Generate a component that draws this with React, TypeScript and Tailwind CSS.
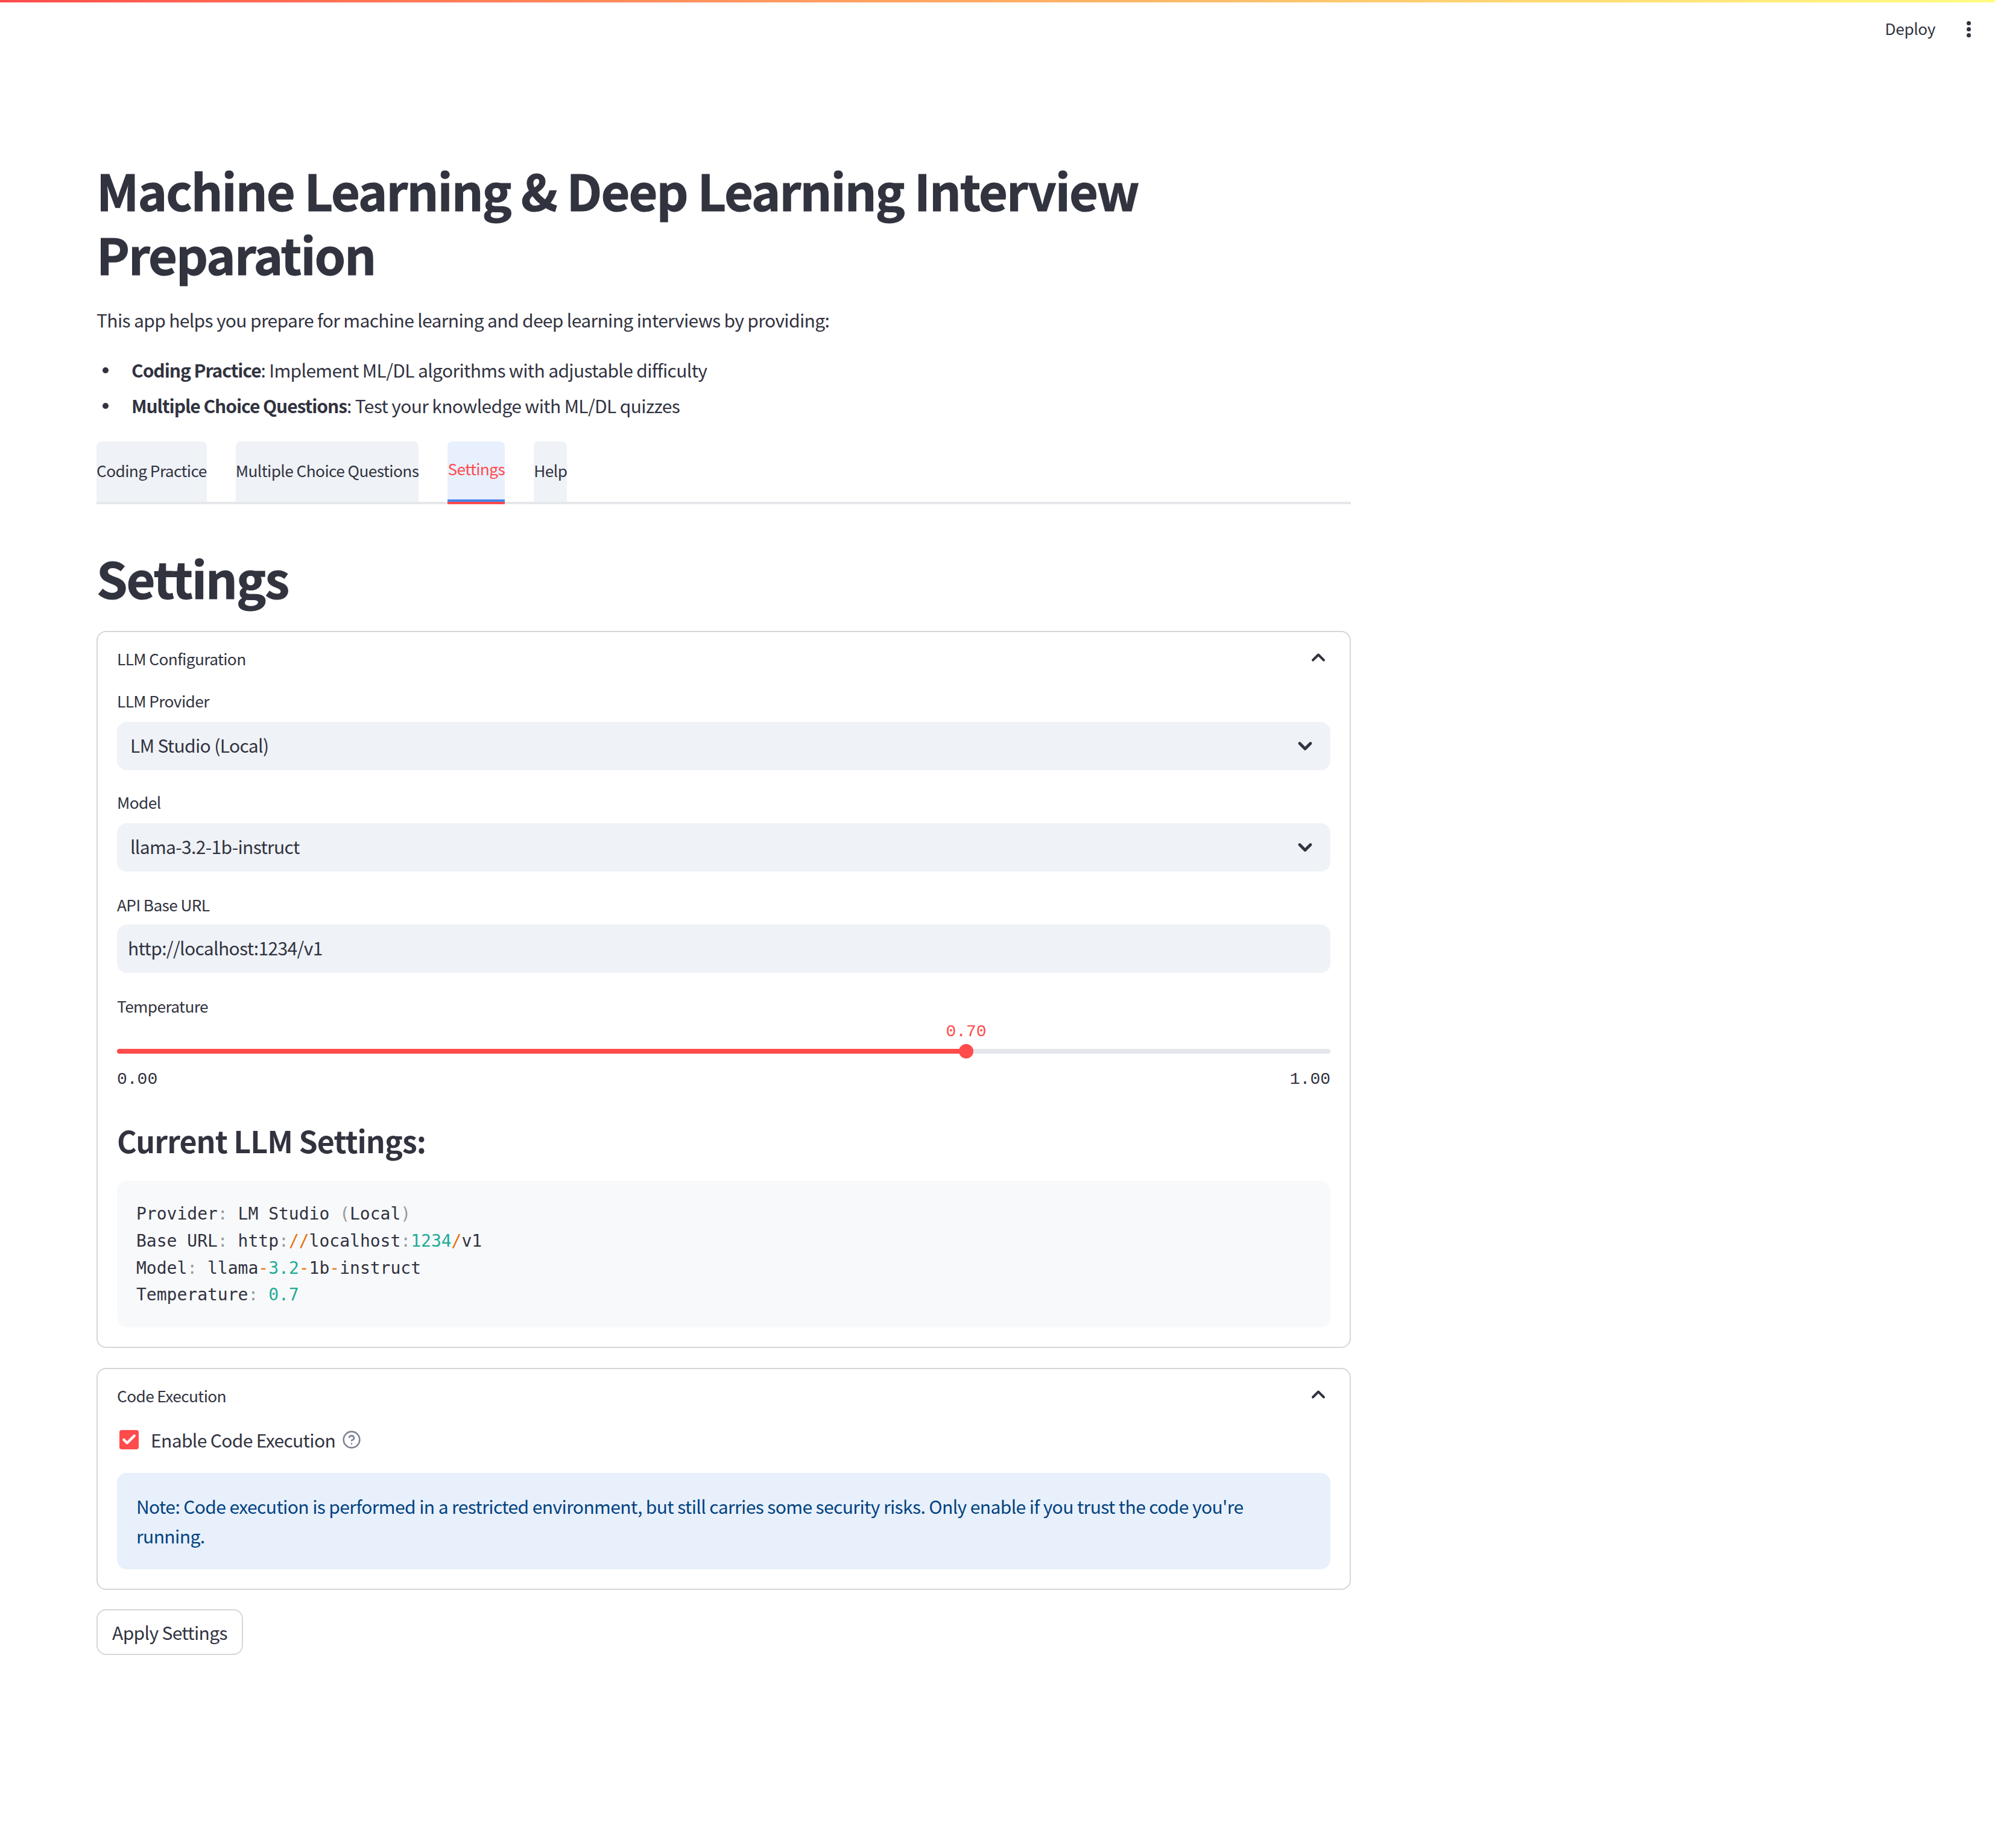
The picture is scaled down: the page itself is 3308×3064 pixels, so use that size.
import { Check, ChevronDown, ChevronUp, CircleHelp } from "lucide-react";
import type { ReactNode } from "react";

function Expander({ title, children }: { title: string; children: ReactNode }) {
  return (
    <div className="border-2 border-[#d5d6d9] rounded-2xl px-[32px] pb-[32px]">
      <div className="h-[88px] flex items-center justify-between text-[26.25px] tracking-[-0.6px] leading-[44px]">
        <span>{title}</span>
        <ChevronUp size={36} strokeWidth={2.6} className="mr-[2px] mt-[-4px]" />
      </div>
      {children}
    </div>
  );
}

function Select({ label, value }: { label: string; value: string }) {
  return (
    <div className="mb-[33px]">
      <div className="text-[26.25px] tracking-[-0.6px] leading-[44px] mb-[11px] mt-[-2px] pb-[2px]">{label}</div>
      <div className="h-[80px] bg-[#eff2f7] rounded-2xl flex items-center justify-between pl-[22px] pr-[24px] text-[30px] tracking-[-0.65px]">
        <span className="mt-[-3px]">{value}</span>
        <ChevronDown size={36} strokeWidth={3.2} />
      </div>
    </div>
  );
}

function Tab({ label, active }: { label: string; active?: boolean }) {
  return (
    <div
      className={
        active
          ? "relative h-[100px] pb-[8px] rounded-t-lg bg-[#e8f0fe] text-[#ff4b4b] text-[26.25px] tracking-[-0.57px] flex items-center"
          : "h-[100px] pb-[3px] rounded-t-lg bg-[#eff2f7] text-[26.25px] tracking-[-0.57px] flex items-center"
      }
    >
      {label}
      {active && (
        <div className="absolute left-0 right-0 bottom-[-4px] h-[8px]">
          <div className="h-[4px] bg-[#4a86e8]" />
          <div className="h-[4px] bg-[#ff4b4b]" />
        </div>
      )}
    </div>
  );
}

function Bullet({ children }: { children: ReactNode }) {
  return (
    <li className="flex items-center pl-[10px]">
      <span className="w-[10px] h-[10px] rounded-full bg-[#31333f] mr-[38px]" />
      <span>{children}</span>
    </li>
  );
}

export default function App() {
  return (
    <div className="w-[3308px] h-[3064px] bg-white text-[#31333f] font-['Noto_Sans_CJK_SC',sans-serif]">
      <div className="h-[4px] bg-gradient-to-r from-[#ff4b4b] to-[#fffd80]" />
      <div className="h-[88px] flex items-center justify-end pr-[40px]">
        <span className="text-[26.25px] tracking-[-0.4px] mr-[52px]">Deploy</span>
        <div className="flex flex-col gap-[3px]">
          <div className="w-[7px] h-[7px] rounded-full bg-[#31333f]" />
          <div className="w-[7px] h-[7px] rounded-full bg-[#31333f]" />
          <div className="w-[7px] h-[7px] rounded-full bg-[#31333f]" />
        </div>
      </div>

      <div className="w-[2080px] ml-[160px]">
        <h1 className="mt-[169px] text-[82.5px] tracking-[-1.95px] leading-[106px] font-bold [-webkit-text-stroke:1px_#31333f]">
          Machine Learning &amp; Deep Learning Interview Preparation
        </h1>
        <p className="mt-[32px] text-[30px] tracking-[-0.65px] leading-[51px]">
          This app helps you prepare for machine learning and deep learning interviews by providing:
        </p>
        <ul className="mt-[32px] text-[30px] tracking-[-0.65px] leading-[51px] space-y-[8px]">
          <Bullet>
            <b className="font-semibold tracking-[-1.05px]">Coding Practice</b>: Implement ML/DL algorithms with adjustable difficulty
          </Bullet>
          <Bullet>
            <b className="font-semibold tracking-[-1.05px]">Multiple Choice Questions</b>: Test your knowledge with ML/DL quizzes
          </Bullet>
        </ul>

        <div className="mt-[34px] flex items-end gap-[48px] border-b-4 border-[#e6e7ea]">
          <Tab label="Coding Practice" />
          <Tab label="Multiple Choice Questions" />
          <Tab label="Settings" active />
          <Tab label="Help" />
        </div>

        <h2 className="mt-[68px] text-[82.5px] tracking-[-2px] leading-[106px] font-bold [-webkit-text-stroke:1px_#31333f]">Settings</h2>

        <div className="mt-[36px]">
          <Expander title="LLM Configuration">
            <div className="pt-[6px]">
              <Select label="LLM Provider" value="LM Studio (Local)" />
              <Select label="Model" value="llama-3.2-1b-instruct" />
              <div className="mb-[33px]">
                <div className="text-[26.25px] tracking-[-0.6px] leading-[44px] mb-[11px]">API Base URL</div>
                <div className="h-[80px] bg-[#eff2f7] rounded-2xl flex items-center pl-[18px] text-[30px] tracking-[-0.65px]">
                  <span className="mt-[-3px]">http://localhost:1234/v1</span>
                </div>
              </div>
            </div>

            <div className="text-[26.25px] tracking-[-0.6px] leading-[44px]">Temperature</div>
            <div className="relative h-[82px]">
              <div className="absolute left-[1408px] top-[3px] w-[0px] flex justify-center font-['Liberation_Mono',monospace] text-[28px] leading-[36px] text-[#ff4b4b]">
                0.70
              </div>
              <div className="absolute top-[49px] left-0 right-0 h-[8px] rounded-full bg-[#e4e6ec]" />
              <div className="absolute top-[49px] left-0 w-[1408px] h-[8px] rounded-l-full bg-[#ff4b4b]" />
              <div className="absolute top-[41px] left-[1396px] w-[24px] h-[24px] rounded-full bg-[#ff4b4b]" />
            </div>
            <div className="flex justify-between font-['Liberation_Mono',monospace] text-[28px] leading-[36px]">
              <span>0.00</span>
              <span>1.00</span>
            </div>

            <h3 className="mt-[42px] mb-[2px] text-[50px] tracking-[-0.9px] leading-[80px] font-semibold">Current LLM Settings:</h3>

            <pre className="mt-[28px] bg-[#f8f9fb] rounded-2xl px-[32px] pt-[33px] pb-[31px] font-['DejaVu_Sans_Mono',monospace] text-[28px] leading-[44.8px]">
              <div>Provider<span className="text-[#999]">:</span> LM Studio <span className="text-[#999]">(</span>Local<span className="text-[#999]">)</span></div>
              <div>Base URL<span className="text-[#999]">:</span> http<span className="text-[#999]">:</span><span className="text-[#e8710a]">//</span>localhost<span className="text-[#999]">:</span><span className="text-[#1fab95]">1234</span><span className="text-[#e8710a]">/</span>v1</div>
              <div>Model<span className="text-[#999]">:</span> llama<span className="text-[#e8710a]">-</span><span className="text-[#1fab95]">3.2</span><span className="text-[#e8710a]">-</span>1b<span className="text-[#e8710a]">-</span>instruct</div>
              <div>Temperature<span className="text-[#999]">:</span> <span className="text-[#1fab95]">0.7</span></div>
            </pre>
          </Expander>
        </div>

        <div className="mt-[33px]">
          <Expander title="Code Execution">
            <div className="mt-[7px] flex items-center h-[44px] pl-[4px] text-[30px] tracking-[-0.65px]">
              <div className="w-[32px] h-[32px] rounded-[4px] bg-[#ff4b4b] flex items-center justify-center">
                <Check size={26} color="white" strokeWidth={4} />
              </div>
              <span className="ml-[20px]">Enable Code Execution</span>
              <CircleHelp size={32} strokeWidth={2} className="ml-[11px] text-[#808495]" />
            </div>
            <div className="mt-[33px] bg-[#e8f0fb] rounded-2xl pl-[32px] pr-[60px] py-[31px] text-[#004280] text-[30px] tracking-[-0.6px] leading-[49px]">
              Note: Code execution is performed in a restricted environment, but still carries some security risks. Only enable if you trust the code you're running.
            </div>
          </Expander>
        </div>

        <button className="mt-[32px] w-[243px] h-[76px] border-2 border-[#d5d6d9] rounded-2xl text-[30px] tracking-[-0.65px] flex items-center justify-center">
          Apply Settings
        </button>
      </div>
    </div>
  );
}
